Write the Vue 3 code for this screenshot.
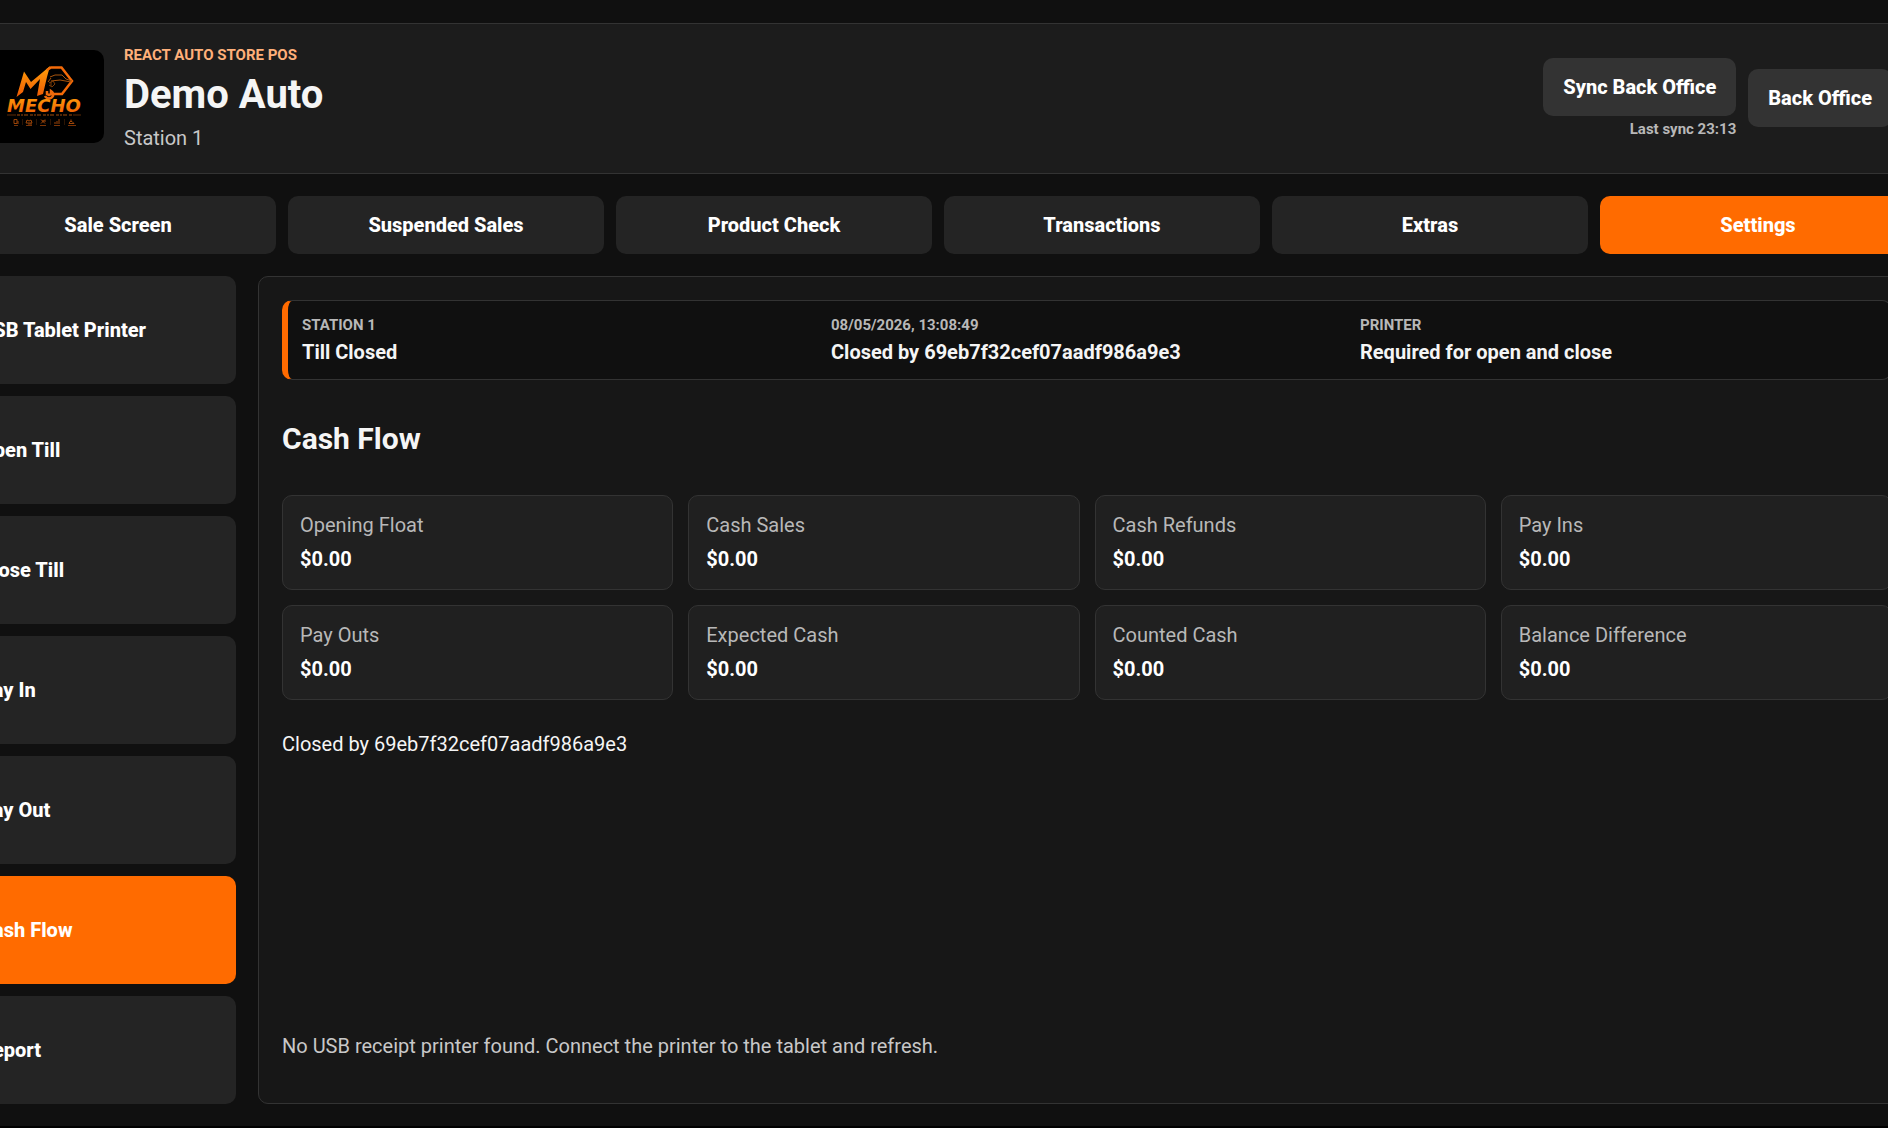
<script setup>
import { ref } from 'vue'

const tabs = ['Sale Screen', 'Suspended Sales', 'Product Check', 'Transactions', 'Extras', 'Settings']
const activeTab = ref('Settings')

const sections = ['USB Tablet Printer', 'Open Till', 'Close Till', 'Pay In', 'Pay Out', 'Cash Flow', 'Report']
const activeSection = ref('Cash Flow')

const status = [
  { label: 'STATION 1', value: 'Till Closed' },
  { label: '08/05/2026, 13:08:49', value: 'Closed by 69eb7f32cef07aadf986a9e3' },
  { label: 'PRINTER', value: 'Required for open and close' },
]

const figures = [
  { label: 'Opening Float', value: '$0.00' },
  { label: 'Cash Sales', value: '$0.00' },
  { label: 'Cash Refunds', value: '$0.00' },
  { label: 'Pay Ins', value: '$0.00' },
  { label: 'Pay Outs', value: '$0.00' },
  { label: 'Expected Cash', value: '$0.00' },
  { label: 'Counted Cash', value: '$0.00' },
  { label: 'Balance Difference', value: '$0.00' },
]
</script>

<template>
  <div class="app">
    <div class="shell">
      <header class="topbar">
        <svg class="logo" viewBox="0 0 119 93" role="img" aria-label="Mecho">
          <defs>
            <linearGradient id="flame" x1="0" y1="0" x2="0" y2="1">
              <stop offset="0" stop-color="#ffa00a" />
              <stop offset="1" stop-color="#ee5a05" />
            </linearGradient>
          </defs>
          <rect width="119" height="93" fill="#000" />
          <path d="M31.500 47 39 21.500 46 32 58 22 65 16 62 27 58 44 52 46 55 29 45.500 39 41 32 38 42Z" fill="url(#flame)" />
          <path d="M62 20 66 17.500H76.500L87 31 77 44H69" fill="none" stroke="#f36a08" stroke-width="2.500" />
          <path d="M65 27 70 25H77L81 29 87 31M66 31 75 30 86 32M66 28 63 32" fill="none" stroke="#a8540c" />
          <path d="M64 33 68 31 70 34 67 37 64 35M66 32V36" fill="none" stroke="#7c3c08" />
          <path d="M62 41v3l2 1 2-1v-3a4.500 4.500 0 0 1 2 5 4.500 4.500 0 0 1-8 0" fill="none" stroke="#ee6a0c" stroke-width="2.500" />
          <text x="59" y="62" text-anchor="middle" class="wordmark">MECHO</text>
          <path d="M22 65H31M88 65H96" stroke="#5c2a06" />
          <path d="M32 65H87" stroke="#a04c0c" stroke-dasharray="3 1 2 1 4 2" />
          <g fill="none" stroke="#9c4508">
            <path d="M29 69.500h3v4h-3zM33 71v3" />
            <path d="M42 70l2 1 2-1 1 3h-6zM43 74h4" />
            <path d="M56 69.500l4 4M60 69.500l-4 4M57 71h4" />
            <path d="M70 74v-2M72 74v-3M74 74v-5" />
            <path d="M86 69.500v2M84 73.500h5l-2-2h-2z" />
            <path d="M29 75.500h4M41 75.500h6M55 75.500h6M69 75.500h6M83 75.500h8" stroke="#7a3406" />
            <path d="M37.500 69v6M51.500 69v6M65.500 69v6M79.500 69v6" stroke="#2c1504" />
          </g>
        </svg>
        <div class="identity">
          <span class="eyebrow">REACT AUTO STORE POS</span>
          <h1>Demo Auto</h1>
          <p>Station 1</p>
        </div>
        <div class="actions">
          <div class="sync">
            <button type="button" class="btn">Sync Back Office</button>
            <span class="last-sync">Last sync 23:13</span>
          </div>
          <button type="button" class="btn">Back Office</button>
        </div>
      </header>

      <nav class="tabs">
        <button
          v-for="tab in tabs"
          :key="tab"
          type="button"
          class="tab"
          :class="{ active: tab === activeTab }"
          @click="activeTab = tab"
        >{{ tab }}</button>
      </nav>

      <div class="workspace">
        <nav class="sidebar">
          <button
            v-for="section in sections"
            :key="section"
            type="button"
            class="side-item"
            :class="{ active: section === activeSection }"
            @click="activeSection = section"
          >{{ section }}</button>
        </nav>

        <main class="panel">
          <section class="status">
            <div v-for="item in status" :key="item.label" class="status-item">
              <span class="status-label">{{ item.label }}</span>
              <strong>{{ item.value }}</strong>
            </div>
          </section>
          <h2>Cash Flow</h2>
          <section class="figures">
            <article v-for="figure in figures" :key="figure.label" class="figure">
              <span>{{ figure.label }}</span>
              <strong>{{ figure.value }}</strong>
            </article>
          </section>
          <p class="closed">Closed by 69eb7f32cef07aadf986a9e3</p>
          <p class="notice">No USB receipt printer found. Connect the printer to the tablet and refresh.</p>
        </main>
      </div>
    </div>
  </div>
</template>

<style>
body {
  background: #000;
}
</style>

<style scoped>
.app {
  overflow: hidden;
  background: #101010;
  color: #f5f5f5;
  font-family: Roboto, "Liberation Sans", sans-serif;
  font-size: 20px;
  line-height: 24px;
}

/* The shell is wider than the window and bleeds past both sides. */
.shell {
  display: flex;
  flex-direction: column;
  gap: 22px;
  margin: 0 -28px 0 -40px;
  padding: 23px 0 22px;
}

h1,
h2,
p {
  margin: 0;
}

button {
  border: 0;
  border-radius: 10px;
  color: #fff;
  font: inherit;
  font-weight: 800;
  cursor: pointer;
}

.topbar {
  display: flex;
  align-items: center;
  gap: 20px;
  padding: 22px 23px 23px 24px;
  border: 1px solid #333;
  background: #1c1c1c;
}

.logo {
  flex: none;
  width: 119px;
  height: 93px;
  margin-bottom: 4px;
  border-radius: 10px;
}

.wordmark {
  fill: url(#flame);
  font: italic bold 18px "DejaVu Sans", sans-serif;
}

.identity {
  display: flex;
  flex: 1;
  flex-direction: column;
  gap: 8px;
}

.eyebrow {
  color: #ffb07a;
  font-size: 15px;
  font-weight: 700;
  line-height: 18px;
}

h1 {
  font-size: 40px;
  font-weight: 700;
  line-height: 46px;
}

.identity p {
  color: #c8c8c8;
}

.actions {
  display: flex;
  align-items: center;
  gap: 12px;
}

.sync {
  display: flex;
  flex-direction: column;
  align-items: flex-end;
  gap: 4px;
}

.btn {
  height: 58px;
  padding: 0 20px;
  background: #333;
}

.last-sync {
  color: #b8b8b8;
  font-size: 15px;
  font-weight: 700;
  line-height: 18px;
}

.tabs {
  display: grid;
  grid-template-columns: repeat(6, 1fr);
  gap: 12px;
}

.tab {
  height: 58px;
  background: #242424;
}

.workspace {
  display: grid;
  grid-template-columns: 276px 1fr;
  gap: 22px;
}

.sidebar {
  display: flex;
  flex-direction: column;
  gap: 12px;
}

.side-item {
  height: 108px;
  padding: 0 20px;
  background: #242424;
  text-align: left;
}

.tab.active,
.side-item.active {
  background: #ff6b00;
}

.panel {
  display: flex;
  flex-direction: column;
  padding: 23px;
  border: 1px solid #333;
  border-radius: 10px;
  background: #171717;
}

.status {
  display: grid;
  grid-template-columns: repeat(3, 1fr);
  gap: 12px;
  padding: 15px 14px;
  border: 1px solid #333;
  border-left: 6px solid #ff6b00;
  border-radius: 10px;
  background: #101010;
}

.status-item {
  display: flex;
  flex-direction: column;
  gap: 6px;
}

.status-label {
  color: #b8b8b8;
  font-size: 15px;
  font-weight: 700;
  line-height: 18px;
}

h2 {
  margin: 41px 0 39px;
  font-size: 30px;
  font-weight: 700;
  line-height: 35px;
}

.figures {
  display: grid;
  grid-template-columns: repeat(4, 1fr);
  gap: 15px;
}

.figure {
  display: flex;
  flex-direction: column;
  gap: 10px;
  padding: 17px 17px 18px;
  border: 1px solid #333;
  border-radius: 10px;
  background: #202020;
}

.figure span {
  color: #b8b8b8;
}

.figure strong {
  color: #fff;
}

.closed {
  margin-top: 32px;
}

.notice {
  margin-top: auto;
  margin-bottom: 22px;
  color: #c8c8c8;
}
</style>
